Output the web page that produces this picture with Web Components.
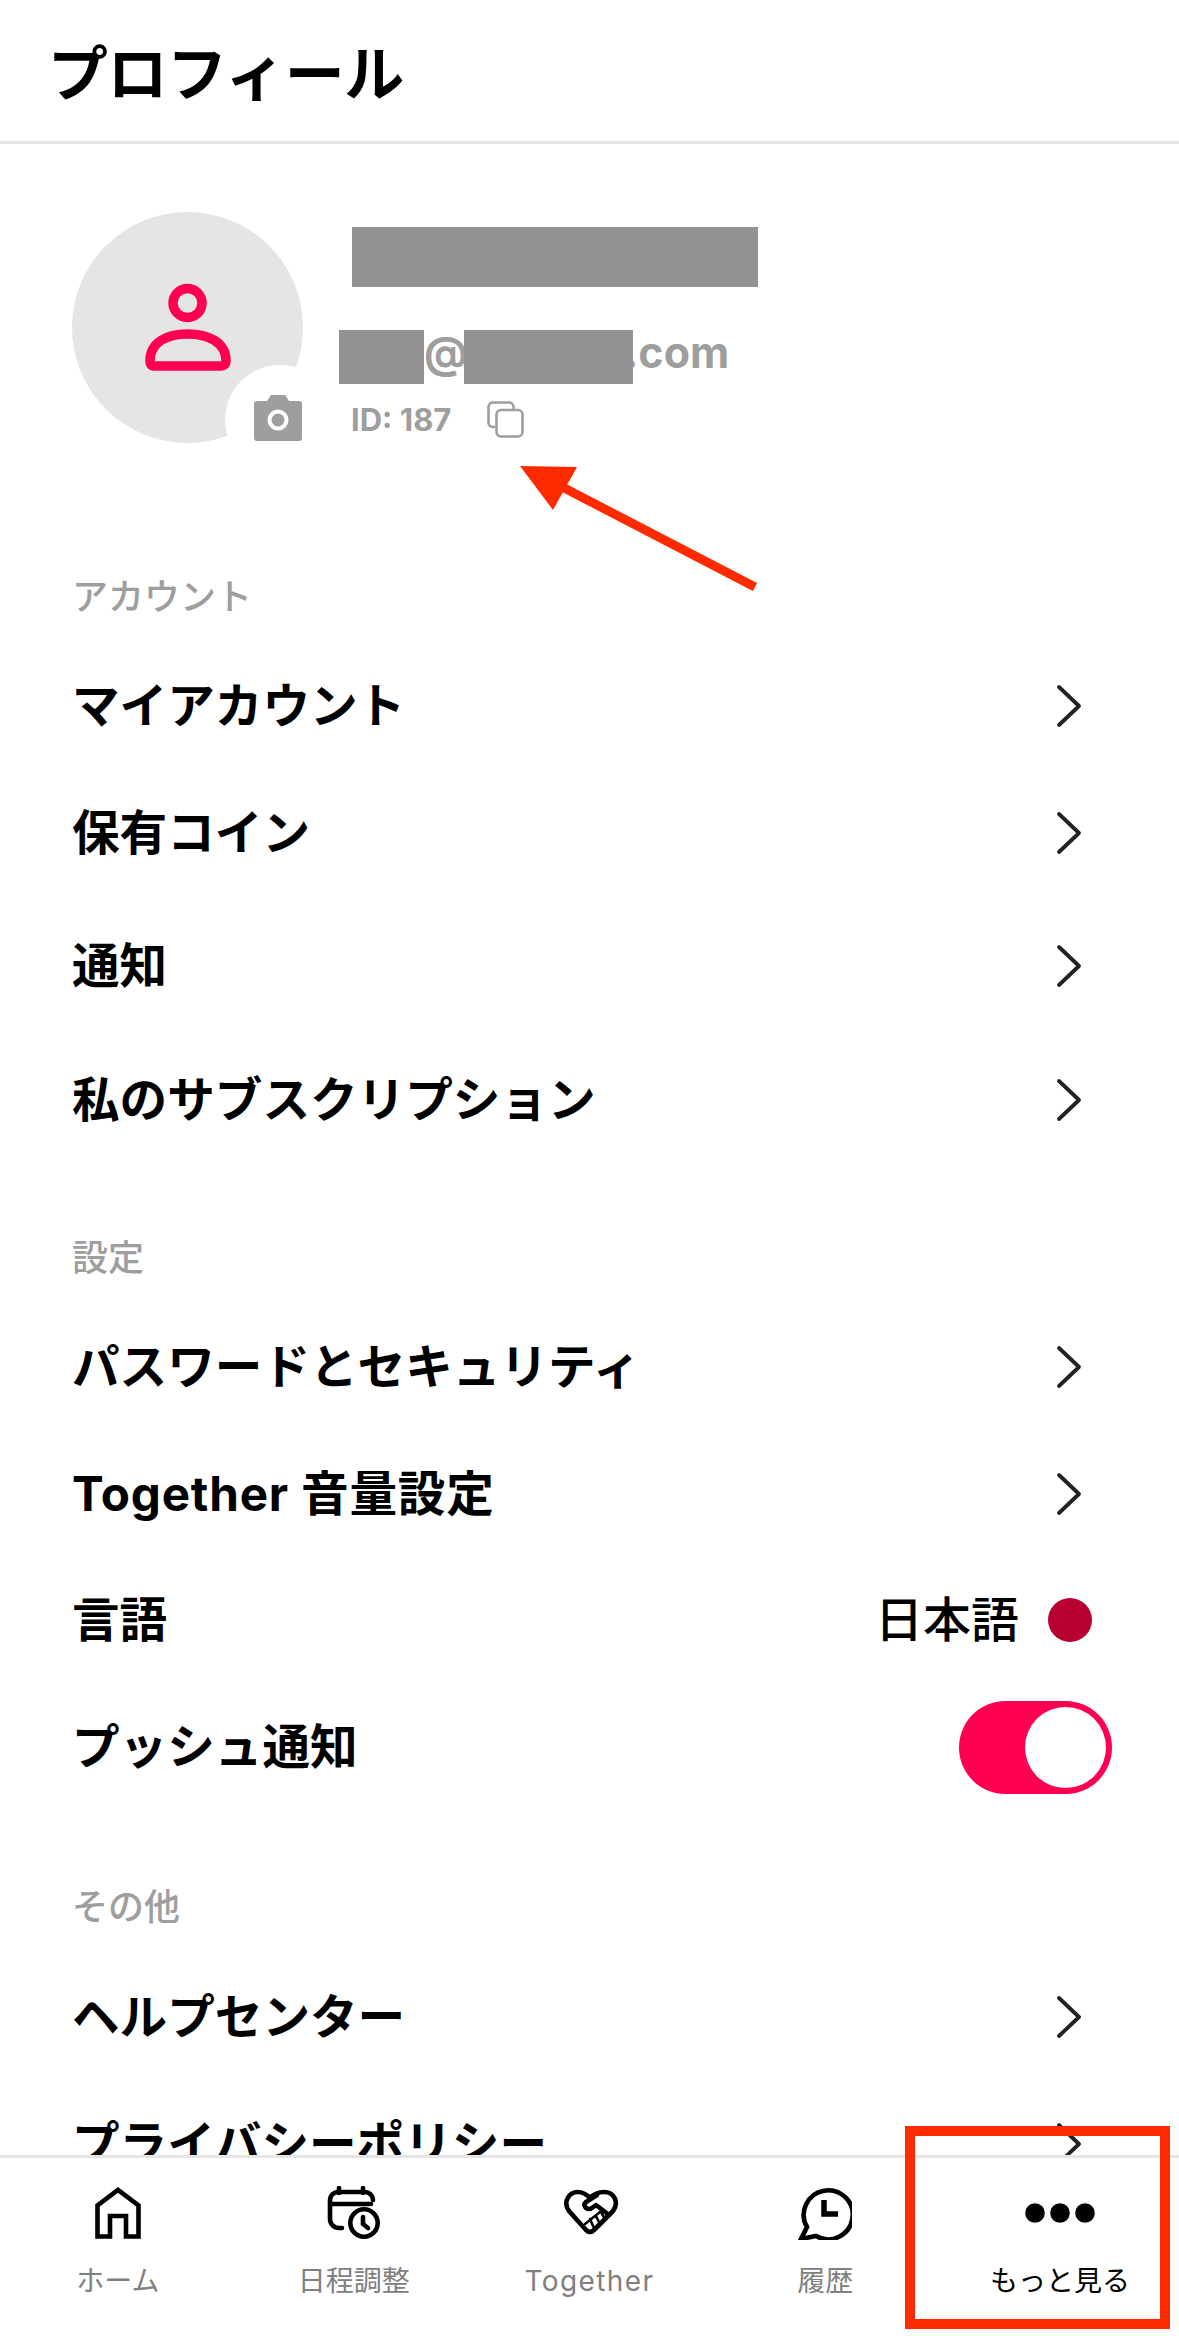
<!DOCTYPE html>
<html lang="ja"><head><meta charset="utf-8">
<style>
html,body{margin:0;padding:0;background:#fff}
body{font-family:Inter,"Noto Sans CJK JP",sans-serif;color:#000}
</style></head><body>
<profile-app>
  <app-header slot="header">プロフィール</app-header>
  <profile-card slot="content"></profile-card>
  <menu-section slot="content" title="アカウント" style="--top:132px;--gap:23px">
    <menu-row label="マイアカウント" chev style="--h:127px"></menu-row>
    <menu-row label="保有コイン" chev style="--h:127px"></menu-row>
    <menu-row label="通知" chev style="--h:140px"></menu-row>
    <menu-row label="私のサブスクリプション" chev style="--h:127px"></menu-row>
  </menu-section>
  <menu-section slot="content" title="設定" style="--top:73px;--gap:23px">
    <menu-row label="パスワードとセキュリティ" chev style="--h:127px"></menu-row>
    <menu-row label="Together 音量設定" chev style="--h:127px;letter-spacing:.8px"></menu-row>
    <menu-row label="言語" style="--h:125px"><lang-value>日本語</lang-value></menu-row>
    <menu-row label="プッシュ通知" style="--h:130px"><toggle-switch></toggle-switch></menu-row>
  </menu-section>
  <menu-section slot="content" title="その他" style="--top:73px">
    <menu-row label="ヘルプセンター" chev style="--h:127px"></menu-row>
    <menu-row label="プライバシーポリシー" chev style="--h:127px"></menu-row>
  </menu-section>
  <tab-bar slot="footer">
    <tab-item label="ホーム"><svg viewBox="0 0 46 52" width="46" height="52" fill="none" stroke="#000" stroke-width="4.6"><path d="M2.500 49.500V18.500L23 3l20.500 15.500V49.500H31V29H15V49.500Z"/></svg></tab-item>
    <tab-item label="日程調整"><svg viewBox="0 0 54 54" width="54" height="54" fill="none" stroke="#000" stroke-width="4.600" stroke-linecap="round"><path d="M15 42h-3a9 9 0 0 1-9-9V14a8 8 0 0 1 8-8h27a8 8 0 0 1 8 8"/><path d="M5 18h39M12 2v5M36 2v5"/><circle cx="37" cy="37" r="13.700"/><path d="M36 31v7l5 4"/></svg></tab-item>
    <tab-item label="Together" style="letter-spacing:1.4px"><svg style="margin:-3px 0 0 4px" viewBox="0 0 56 48" width="56" height="48" fill="none" stroke="#000" stroke-width="4.600" stroke-linejoin="round" stroke-linecap="round"><path d="M46 27 50 23C56 15 52 4 41 4 35 4 30 7 27 10 23 6 19 4 15 4 5 4 0 15 6 23L23 42Q27 46 31 42L46 27"/><path d="M34 7 23 14Q20 17 23 20 26 22 29 20L33 17 46 27"/><path d="M22 36 37 24M27 31l3.500 8M32.700 27.500l4 8M38 24l4 7" stroke-width="2.600"/></svg></tab-item>
    <tab-item label="履歴"><svg viewBox="0 0 54 54" width="54" height="54" fill="none" stroke="#000" stroke-width="4.600"><path d="M9 41A24.500 24.500 0 1 1 18 50L3 53Z" stroke-linejoin="miter"/><path d="M26 14V28H40" stroke-width="5.500"/></svg></tab-item>
    <tab-item label="もっと見る" active style="margin-left:-2px"><svg viewBox="0 0 70 20" width="70" height="20" fill="#000"><circle cx="10" cy="10" r="9.800"/><circle cx="35" cy="10" r="9.800"/><circle cx="60" cy="10" r="9.800"/></svg></tab-item>
  </tab-bar>
  <annotation-layer slot="overlay"></annotation-layer>
</profile-app>
<script>
const def=(name,html,init)=>customElements.define(name,class extends HTMLElement{
  constructor(){super();this.attachShadow({mode:'open'}).innerHTML=html;}
  connectedCallback(){init&&init(this,this.shadowRoot);}
});
const FONT='Inter,"Noto Sans CJK JP",sans-serif';
def('profile-app',`<style>
:host{display:flex;flex-direction:column;width:1179px;height:2336px;position:relative;overflow:hidden;background:#fff;font-family:${FONT}}
.content{flex:1;min-height:0;overflow:hidden}
</style><slot name="header"></slot><div class="content"><slot name="content"></slot></div><slot name="footer"></slot><slot name="overlay"></slot>`);
def('app-header',`<style>
:host{display:flex;align-items:center;box-sizing:border-box;height:144px;padding:6px 0 0 48px;border-bottom:3px solid #e5e5e5;font-size:60px;font-weight:700;letter-spacing:-.5px;line-height:1}
</style><slot></slot>`);
def('profile-card',`<style>
:host{display:flex;padding:68px 0 0 72px}
.av{position:relative;width:231px;height:231px;border-radius:50%;background:#e5e5e5;display:flex;align-items:flex-start;justify-content:center;flex:none}
.person{margin-top:68px}
.cut{position:absolute;left:153px;top:153px;width:110px;height:110px;border-radius:50%;background:#fff;overflow:hidden}
.cam{position:absolute;left:181px;top:183px}
.info{margin-left:36px;display:flex;flex-direction:column;width:420px}
.name{margin:15px 0 0 13px;width:406px;height:60px;background:#939393}
.mail{display:flex;align-items:flex-start;height:54px;margin-top:43px;font-size:43px;font-weight:700;color:#9e9e9e;line-height:44px}
.mail i{display:block;background:#939393;height:54px;position:relative;z-index:1}
.id{display:flex;align-items:center;margin:17px 0 0 12px;font-size:31px;font-weight:700;color:#9e9e9e;line-height:36px}
.copy{margin-left:36px}
</style>
<div class="av">
<svg class="person" width="88" height="96" viewBox="0 0 88 96" fill="none" stroke="#ff0050" stroke-width="9.500"><circle cx="43.500" cy="23" r="14.500"/><path d="M6 81C6 62 23 54 43.500 54S82 62 82 81Q82 86 77 86H10Q6 86 6 81Z" stroke-linejoin="round"/></svg>
<div class="cut"></div>
<svg class="cam" width="50" height="46" viewBox="0 0 50 46"><path fill="#9e9e9e" fill-rule="evenodd" d="M4 6h10l4-6h14l4 6h10a3 3 0 0 1 3 3v34a3 3 0 0 1-3 3H4a3 3 0 0 1-3-3V9a3 3 0 0 1 3-3Z"/><circle cx="25" cy="25" r="8.500" fill="none" stroke="#fff" stroke-width="4"/></svg>
</div>
<div class="info">
<div class="name"></div>
<div class="mail"><i style="width:85px"></i><span style="width:40px;flex:none">@</span><i style="width:169px"></i><span style="margin-left:-9px">.com</span></div>
<div class="id"><span>ID: 187</span>
<svg class="copy" width="37" height="37" viewBox="0 0 37 37" fill="none" stroke="#9e9e9e" stroke-width="2.600"><path d="M8 26H6a4.500 4.500 0 0 1-4.500-4.500V5.500A4.500 4.500 0 0 1 6 1.500h16A4.500 4.500 0 0 1 26.500 5.500V9"/><rect x="9.500" y="9" width="26" height="26.500" rx="4.500"/></svg>
</div></div>`);
def('menu-section',`<style>
:host{display:block;padding-top:var(--top,100px)}
.t{font-size:36px;font-weight:500;color:#9e9e9e;line-height:44px;padding-left:72px;height:44px}
.rows{display:flex;flex-direction:column;padding-top:var(--gap,24px)}
</style><div class="t"></div><div class="rows"><slot></slot></div>`,(el,s)=>{s.querySelector('.t').textContent=el.getAttribute('title');el.removeAttribute('title');});
def('menu-row',`<style>
:host{display:flex;align-items:center;height:var(--h,127px);padding:0 66px 0 72px;font-size:47.6px;font-weight:700;line-height:1;box-sizing:border-box}
.l{flex:1;white-space:nowrap}
.r{display:flex;align-items:center}
svg{display:block;margin-right:30px}
</style><span class="l"></span><div class="r"><slot></slot></div>`,(el,s)=>{
  s.querySelector('.l').textContent=el.getAttribute('label');
  if(el.hasAttribute('chev')){s.querySelector('.r').insertAdjacentHTML('beforeend','<svg width="28" height="44" viewBox="0 0 28 44" fill="none" stroke="#222" stroke-width="3.800" stroke-linecap="round" stroke-linejoin="round"><path d="M4 3l20 19L4 41"/></svg>');}
});
def('lang-value',`<style>
:host{display:flex;align-items:center;font-size:48px;font-weight:500;margin-right:21px}
i{display:block;width:44px;height:44px;border-radius:50%;background:#b80030;margin-left:29px}
</style><slot></slot><i></i>`);
def('toggle-switch',`<style>
:host{display:block;width:153px;height:93px;border-radius:47px;background:#ff0050;position:relative;margin-right:1px}
i{position:absolute;right:6px;top:6px;width:81px;height:81px;border-radius:50%;background:#fff}
</style><i></i>`);
def('tab-bar',`<style>
:host{display:grid;grid-template-columns:repeat(5,1fr);box-sizing:border-box;height:181px;border-top:3px solid #e5e5e5;background:#fff;padding-top:28px;align-items:start}
</style><slot></slot>`);
def('tab-item',`<style>
:host{display:flex;flex-direction:column;align-items:center;font-size:28px;font-weight:400;color:#808080}
:host([active]){color:#000}
.ic{height:54px;display:flex;align-items:center;justify-content:center}
.lb{margin-top:21px;line-height:40px;white-space:nowrap}
</style><div class="ic"><slot></slot></div><div class="lb"></div>`,(el,s)=>{s.querySelector('.lb').textContent=el.getAttribute('label');});
def('annotation-layer',`<style>
:host{position:absolute;inset:0;display:block;pointer-events:none}
svg{position:absolute;left:0;top:0}
.box{position:absolute;left:905px;top:2126px;width:265px;height:203px;box-sizing:border-box;border:10px solid #ff2a00}
</style>
<svg width="1179" height="2336"><path d="M755 587 543 477" stroke="#ff2a00" stroke-width="9" fill="none"/><path d="M520 466 577 467 553 510Z" fill="#ff2a00"/></svg>
<div class="box"></div>`);
</script>
</body></html>
